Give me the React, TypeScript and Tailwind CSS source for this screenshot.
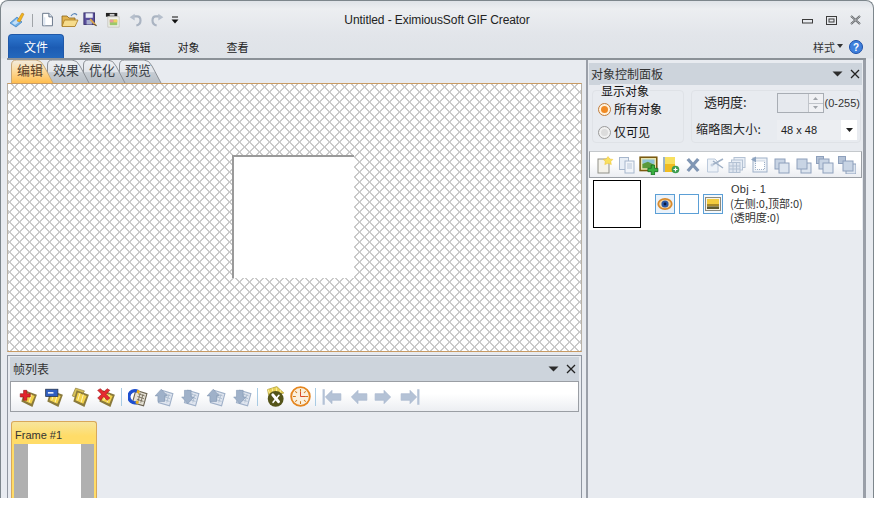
import React from "react";

const FONT = "font-['Noto_Sans_CJK_SC','Liberation_Sans',sans-serif]";

function Ico({ s = 18, children, className }: { s?: number; children: React.ReactNode; className?: string }) {
  return (
    <svg width={s} height={s} viewBox="0 0 18 18" className={className}>
      {children}
    </svg>
  );
}

const Wand = () => (
  <Ico s={18}>
    <path d="M1 12 L8 6 L13 11 L7 16 Z" fill="#6fb0e8" stroke="#3f7fc0" strokeWidth="0.7" />
    <path d="M3 12 L8 8 L10 11 L6 14 Z" fill="#c4e0f8" />
    <path d="M8 10 L13 2 L15 3 L11 11 Z" fill="#f2b51e" stroke="#b87a10" strokeWidth="0.5" />
  </Ico>
);
const NewDoc = () => (
  <Ico s={16}>
    <path d="M3 1.5 H10 L14 5.5 V15.5 H3 Z" fill="#fff" stroke="#5b6b80" />
    <path d="M10 1.5 V5.5 H14" fill="#dbe3ee" stroke="#5b6b80" />
    <rect x="4" y="6" width="2" height="9" fill="#dde6f2" />
  </Ico>
);
const Open = () => (
  <Ico s={18}>
    <path d="M1 5 H6 L8 7 H14 V15 H1 Z" fill="#e2b34f" stroke="#8c6418" strokeWidth="0.8" />
    <path d="M3.5 9 H17 L14 15.5 H1 Z" fill="#f6dc8c" stroke="#a87a20" strokeWidth="0.8" />
    <path d="M10 5 Q13 1 16 4" fill="none" stroke="#5b87b8" strokeWidth="1.2" />
  </Ico>
);
const SaveAs = () => (
  <Ico s={16}>
    <rect x="1" y="1" width="12" height="13" fill="#5a4e9c" stroke="#36306c" />
    <rect x="3" y="1.5" width="8" height="5" fill="#e8ecf6" />
    <rect x="4" y="9" width="6" height="5" fill="#aab0d0" />
    <path d="M8 8 L14.5 15" stroke="#d9a64a" strokeWidth="2" />
    <path d="M12.5 14 L15.5 15.5" stroke="#333" strokeWidth="1" />
  </Ico>
);
const Preview = () => (
  <Ico s={17}>
    <rect x="1" y="1" width="12" height="4" fill="#222" />
    <rect x="5" y="2" width="5" height="2" fill="#cfcfcf" />
    <path d="M3 5 H15 V16 H3 Z" fill="#f0f0ea" stroke="#c8c8c0" />
    <rect x="5" y="8" width="8" height="6" fill="#9cc86c" />
    <rect x="5" y="8" width="4" height="3" fill="#e89aa0" />
    <rect x="9" y="8" width="4" height="3" fill="#f0d060" />
  </Ico>
);
const Undo = ({ flip = false }: { flip?: boolean }) => (
  <Ico s={15} className={flip ? "-scale-x-100" : ""}>
    <path d="M6 4 H11 Q15 4 15 9 Q15 14 10 15" fill="none" stroke="#aab4c2" strokeWidth="2.6" />
    <path d="M8 1 L2 5 L8 9 Z" fill="#b6bfcc" />
  </Ico>
);
const Dots = () => (
  <svg width="8" height="8" viewBox="0 0 8 8">
    <rect x="1" y="0.5" width="6" height="1" fill="#111" />
    <path d="M0.5 3.5 H7.5 L4 7.5 Z" fill="#111" />
  </svg>
);

const film = (
  <>
    <path d="M6 3 L17 7 L13 18 L3 13 Z" fill="#8a7a3c" />
    <path d="M7 5 L15 8 L12 15 L5 12 Z" fill="#f2d24a" />
    <path d="M9 5.5 L7 12 M12 6.8 L10 13.8" stroke="#fff4b8" strokeWidth="0.9" />
  </>
);
const FrameAdd = () => (
  <Ico s={20}>
    {film}
    <path d="M5 3 H8 V6 H11 V9 H8 V12 H5 V9 H2 V6 H5 Z" fill="#e2242c" stroke="#8e1216" strokeWidth="0.5" />
  </Ico>
);
const FrameImg = () => (
  <Ico s={20}>
    {film}
    <rect x="1.5" y="2" width="11" height="6.5" fill="#2f5fc0" stroke="#24324a" strokeWidth="0.7" />
    <rect x="3.5" y="4.5" width="5" height="1.5" fill="#e8f0ff" />
  </Ico>
);
const FrameDup = () => (
  <Ico s={20}>
    <path d="M5 1 L13 3.5 L9 11 L2 8 Z" fill="#d8c25a" stroke="#8a7a3c" strokeWidth="0.6" />
    {film}
  </Ico>
);
const FrameDel = () => (
  <Ico s={20}>
    {film}
    <path d="M1.5 3 L4 1.5 L7 4.5 L10 1.5 L12.5 3 L9 6.5 L12.5 10 L10 12 L7 8.5 L4 12 L1.5 10 L5 6.5 Z" fill="#e62a30" stroke="#8e1216" strokeWidth="0.5" />
  </Ico>
);
const Sheet = ({ dim = true }: { dim?: boolean }) => (
  <>
    <path d="M7 3 L17 6 L14 17 L4 14 Z" fill={dim ? "#dfe5ef" : "#e4e0d4"} stroke={dim ? "#9fb0c8" : "#6a6250"} />
    <path d="M9 6 L15 8 M8.5 8.5 L14.5 10.5 M8 11 L14 13 M11 5.5 L9 13 M13.5 6.5 L11.5 14" stroke={dim ? "#a8b8cc" : "#6a6250"} strokeWidth="0.7" />
  </>
);
const Magnet = () => (
  <Ico s={20}>
    <Sheet dim={false} />
    <path d="M9 4 A5.5 5.5 0 1 0 8 14" fill="none" stroke="#1d4fd0" strokeWidth="3" />
    <path d="M8.5 2.5 L11 3.8 L9.5 6 L7.5 5 Z M8 12 L10 13.5 L8.5 15.5 L6.5 14.5 Z" fill="#e6b020" />
  </Ico>
);
const SheetUp = () => (
  <Ico s={20}>
    <Sheet />
    <path d="M6.5 2 L12 8 H9.5 V13 H3.5 V8 H1 Z" fill="#9fb1c9" stroke="#8195b2" strokeWidth="0.5" />
  </Ico>
);
const SheetDown = () => (
  <Ico s={20}>
    <Sheet />
    <path d="M4 3 H10 V9 H12.5 L7 15 L1.5 9 H4 Z" fill="#9fb1c9" stroke="#8195b2" strokeWidth="0.5" />
  </Ico>
);
const Gear = () => (
  <Ico s={21}>
    <path d="M3 3 L11 0.5 L17 6 L10 8 L4 8 Z" fill="#e8d054" stroke="#a89830" strokeWidth="0.6" />
    <path d="M5 7 L3.5 3 M8 7 L7 2 M11 7 L10.5 1.5 M14 7 L14 3.5" stroke="#fff2a0" strokeWidth="0.8" />
    <circle cx="10" cy="11" r="6.8" fill="#54541a" />
    <path d="M7.5 7.5 L12.5 13.5" stroke="#fff" strokeWidth="2.4" strokeLinecap="round" />
    <path d="M12.8 8 L7.8 14" stroke="#fff" strokeWidth="1.4" strokeLinecap="round" />
  </Ico>
);
const Clock = () => (
  <Ico s={21}>
    <circle cx="9" cy="9" r="8" fill="#fbf0dd" stroke="#e58620" strokeWidth="1.6" />
    <path d="M9 2.5 V5 M9 13 V15.5 M2.5 9 H5 M13 9 H15.5 M4.5 4.5 L6 6 M13.5 4.5 L12 6 M4.5 13.5 L6 12 M13.5 13.5 L12 12" stroke="#d07818" strokeWidth="0.9" />
    <path d="M9 5 V9 H13" fill="none" stroke="#d8401c" strokeWidth="0.8" />
  </Ico>
);
const Nav = ({ bar, dir }: { bar: boolean; dir: "l" | "r" }) => (
  <Ico s={20} className={dir === "r" ? "-scale-x-100" : ""}>
    {bar && <rect x="0.5" y="2" width="2" height="14" fill="#b4c2d6" />}
    <path d="M3 9 L9 3 V6 H17 V12 H9 V15 Z" fill="#b4c2d6" stroke="#a9b8ce" strokeWidth="0.6" />
  </Ico>
);

const ObjNew = () => (
  <Ico s={18}>
    <rect x="2" y="3" width="11" height="14" fill="#f4f2ea" stroke="#8f8f88" />
    <path d="M12 0.5 L13.8 3 L16.8 3.4 L14.8 5.6 L15.3 8.6 L12 7.2 L8.8 8.6 L9.3 5.6 L7.3 3.4 L10.2 3 Z" fill="#f8e060" stroke="#eec030" strokeWidth="0.5" />
  </Ico>
);
const ObjCopy = () => (
  <Ico s={18}>
    <rect x="1.5" y="1.5" width="9" height="12" fill="#e8eef6" stroke="#a6b6cc" />
    <rect x="7" y="5" width="9" height="12" fill="#f2f5fa" stroke="#a6b6cc" />
    <path d="M9 8 H14 M9 10 H14 M9 12 H14" stroke="#b8c6d8" />
  </Ico>
);
const ObjImg = () => (
  <Ico s={20}>
    <rect x="1" y="2" width="15" height="12" fill="#e8e4b0" stroke="#7a5a10" strokeWidth="1.4" />
    <rect x="3" y="4" width="11" height="4" fill="#8fc4d8" />
    <path d="M3 8 L8 6 L14 9 V12 H3 Z" fill="#5a9a3c" />
    <path d="M11 9 H14 V12 H17 V15 H14 V18 H11 V15 H8 V12 H11 Z" fill="#38b040" stroke="#146820" strokeWidth="0.7" />
  </Ico>
);
const ObjMovie = () => (
  <Ico s={18}>
    <rect x="1" y="1" width="12" height="15" fill="#f0bc20" />
    <rect x="1" y="1" width="2" height="15" fill="#9ab4c8" />
    <rect x="3" y="1" width="10" height="7" fill="#f8e060" />
    <circle cx="13.5" cy="13.5" r="3.8" fill="#3c9c50" />
    <path d="M13.5 11.5 V15.5 M11.5 13.5 H15.5" stroke="#fff" strokeWidth="1.2" />
  </Ico>
);
const ObjX = () => (
  <Ico s={18}>
    <path d="M2.5 4 L5 2 L9 6.5 L13 2 L15.5 4 L11 9 L15.5 14 L13 16 L9 11.5 L5 16 L2.5 14 L7 9 Z" fill="#8096b4" />
  </Ico>
);
const ObjCut = () => (
  <Ico s={18}>
    <path d="M1.5 3 H9 L12 6 V16 H1.5 Z" fill="#edf2f8" stroke="#bccadc" />
    <path d="M6 9 L17 3 M7 5 L17 12" stroke="#9fb0c6" strokeWidth="1.5" />
    <circle cx="6" cy="9" r="1.5" fill="#c4d0e0" />
  </Ico>
);
const ObjStack = () => (
  <Ico s={18}>
    <rect x="6" y="1.5" width="11" height="10" fill="#e8eef6" stroke="#b4c2d4" />
    <rect x="3.5" y="4" width="11" height="10" fill="#e8eef6" stroke="#b4c2d4" />
    <rect x="1" y="6.5" width="11" height="10" fill="#dfe6f0" stroke="#b4c2d4" />
    <path d="M1 10 H12 M1 13 H12 M5 7 V16 M8.5 7 V16" stroke="#b4c2d4" />
  </Ico>
);
const ObjBack = () => (
  <Ico s={18}>
    <rect x="3" y="2" width="14" height="14" fill="#eef2f7" stroke="#9eb0c8" />
    <rect x="5.5" y="5" width="9" height="8.5" fill="#fff" stroke="#9eb0c8" strokeDasharray="1 1" />
    <path d="M1 3.5 L6 0.5 V6.5 Z" fill="#8ea4c0" />
  </Ico>
);
const Lay = ({ front, x1, y1, x2, y2, extra }: { front: boolean; x1: number; y1: number; x2: number; y2: number; extra?: boolean }) => {
  const a = <rect x={x1} y={y1} width="10" height="10" fill="#c8d4e4" stroke="#8ea0bc" />;
  const b = <rect x={x2} y={y2} width="10" height="10" fill="#dde5ef" stroke="#8ea0bc" />;
  return (
    <Ico s={18}>
      {extra && <rect x="0.5" y="0.5" width="7" height="7" fill="#b4c2d6" stroke="#8ea0bc" />}
      {front ? a : b}
      {front ? b : a}
    </Ico>
  );
};

const Eye = () => (
  <svg width="16" height="14" viewBox="0 0 16 14">
    <ellipse cx="8" cy="7" rx="7.6" ry="6" fill="#d88a2c" />
    <ellipse cx="8" cy="7" rx="5.8" ry="4.2" fill="#f4d8a8" />
    <circle cx="8" cy="7" r="3.6" fill="#2a58a8" />
    <circle cx="8" cy="7" r="1.4" fill="#0c1c40" />
  </svg>
);
const Landscape = () => (
  <svg width="16" height="14" viewBox="0 0 16 14">
    <rect x="0.5" y="0.5" width="15" height="13" fill="#f5f2e8" stroke="#8a8a80" />
    <rect x="2" y="2" width="12" height="5" fill="#f2cb3e" />
    <rect x="2" y="7" width="12" height="2.5" fill="#a8892a" />
    <rect x="2" y="9.5" width="12" height="2.5" fill="#5d5830" />
  </svg>
);

function Tab({ label, active, w, z }: { label: string; active?: boolean; w: number; z: string }) {
  const d = `M0.5 24 V6 Q0.5 1 5.5 1 H${w - 18} Q${w - 13} 1 ${w - 10} 7 L${w - 1} 24`;
  const id = active ? "tabA" : "tabI";
  return (
    <div className={`relative h-6 shrink-0 mr-[-7px] ${z}`} style={{ width: w }}>
      <svg width={w} height={24} className="absolute inset-0">
        <defs>
          <linearGradient id="tabA" x1="0" y1="0" x2="0" y2="1">
            <stop offset="0" stopColor="#f2ece0" />
            <stop offset="0.45" stopColor="#fcdca0" />
            <stop offset="1" stopColor="#ffbd4e" />
          </linearGradient>
          <linearGradient id="tabI" x1="0" y1="0" x2="0" y2="1">
            <stop offset="0" stopColor="#eef0f3" />
            <stop offset="0.5" stopColor="#e2e5ea" />
            <stop offset="0.55" stopColor="#c6ccd3" />
            <stop offset="1" stopColor="#b8bfc6" />
          </linearGradient>
        </defs>
        <path d={d} fill={`url(#${id})`} stroke={active ? "#c8a878" : "#8c9096"} />
      </svg>
      <span className={`absolute left-[6px] top-[2px] text-[13px] leading-[18px] whitespace-nowrap ${active ? "text-[#5a4028]" : "text-[#3a3f46]"}`}>{label}</span>
    </div>
  );
}

const PanelBtns = () => (
  <div className="flex items-center gap-[7px]">
    <svg width="11" height="6" viewBox="0 0 11 6">
      <path d="M0.5 0.5 H10.5 L5.5 5.5 Z" fill="#2c2c2c" />
    </svg>
    <svg width="10" height="10" viewBox="0 0 10 10">
      <path d="M1 1 L9 9 M9 1 L1 9" stroke="#222" strokeWidth="1.3" />
    </svg>
  </div>
);

const Slot = ({ children }: { children: React.ReactNode }) => (
  <div className="w-[26px] flex items-center justify-center shrink-0">{children}</div>
);
const RSlot = ({ children }: { children: React.ReactNode }) => (
  <div className="w-[22px] flex items-center justify-center shrink-0">{children}</div>
);
const VSep = () => <div className="w-px h-[18px] bg-[#a8cbe4] ml-[2px] mr-[3px] shrink-0" />;

const Radio = ({ on, label }: { on?: boolean; label: string }) => (
  <div className="flex items-center gap-[3px]">
    <div className={`w-[13px] h-[13px] rounded-full border flex items-center justify-center ${on ? "border-[#c07c3c] bg-[#fff2dd]" : "border-[#9a9a9a] bg-[#f0f0f0]"}`}>
      <div className={`w-[7px] h-[7px] rounded-full ${on ? "bg-[#f08a24]" : "bg-[#dcdcdc]"}`} />
    </div>
    <span className="text-[12px] leading-[16px] text-[#111]">{label}</span>
  </div>
);

export default function App() {
  return (
    <div className={`w-[874px] h-[517px] bg-white overflow-hidden ${FONT}`}>
      <div className="h-[498px] rounded-t-[8px] border-x border-t border-[#7d868c] bg-[linear-gradient(180deg,#dfe3e8_0px,#eceef1_8px,#e2e5ea_34px,#dfe3e8_57px,#e8ebf0_58px)] flex flex-col overflow-hidden">
        {/* title bar */}
        <div className="h-[33px] shrink-0 grid grid-cols-[1fr_auto_1fr] items-center">
          <div className="flex items-center pl-[8px] pt-[5px]">
            <Wand />
            <div className="w-px h-[13px] bg-[#a0a4a8] mx-[5px]" />
            <div className="ml-[2px]"><NewDoc /></div>
            <div className="ml-[5px]"><Open /></div>
            <div className="ml-[4px]"><SaveAs /></div>
            <div className="ml-[6px]"><Preview /></div>
            <div className="ml-[6px]"><Undo /></div>
            <div className="ml-[7px]"><Undo flip /></div>
            <div className="ml-[6px]"><Dots /></div>
          </div>
          <div className="text-[12px] pt-[4px] text-[#222] font-['Liberation_Sans',sans-serif] tracking-[-0.08px]">Untitled - EximiousSoft GIF Creator</div>
          <div className="flex items-center justify-end gap-[13px] pr-[12px] pt-[5px]">
            <svg width="11" height="8" viewBox="0 0 11 8"><rect x="0.5" y="3.5" width="10" height="3.5" fill="none" stroke="#3c3c3c" /></svg>
            <svg width="11" height="9" viewBox="0 0 11 9"><rect x="0.5" y="0.5" width="10" height="8" fill="none" stroke="#3c3c3c" /><rect x="3" y="3" width="5" height="3" fill="none" stroke="#3c3c3c" /></svg>
            <svg width="11" height="10" viewBox="0 0 11 10"><path d="M1 1 L10 9 M10 1 L1 9" stroke="#585c60" strokeWidth="2" /><path d="M1 1 L10 9 M10 1 L1 9" stroke="#eee" strokeWidth="0.6" /></svg>
          </div>
        </div>
        {/* ribbon tabs */}
        <div className="h-[24px] shrink-0 flex items-stretch pl-[7px]">
          <div className="w-[56px] rounded-t-[4px] border border-[#1f58a8] border-b-0 bg-[linear-gradient(180deg,#2f78d0,#1c5cb4_55%,#2468bc)] flex items-center justify-center text-[12px] text-white">文件</div>
          <div className="flex ml-[2px]">
            {["绘画", "编辑", "对象", "查看"].map((t) => (
              <div key={t} className="w-[49px] flex items-center justify-center text-[11px] text-[#222] pt-[3px]">{t}</div>
            ))}
          </div>
          <div className="ml-auto flex items-center pr-[10px] pt-[2px]">
            <span className="text-[11px] text-[#333]">样式</span>
            <svg width="6" height="4" viewBox="0 0 6 4" className="ml-[2px] mb-[3px]"><path d="M0 0 H6 L3 4 Z" fill="#333" /></svg>
            <svg width="14" height="14" viewBox="0 0 14 14" className="ml-[6px]">
              <circle cx="7" cy="7" r="6.5" fill="#3f80dc" stroke="#1e50a8" />
              <text x="7" y="10.5" textAnchor="middle" fontSize="10" fontWeight="700" fill="#fff" fontFamily="Liberation Sans">?</text>
            </svg>
          </div>
        </div>
        {/* body */}
        <div className="flex-1 min-h-0 flex pl-[6px] pr-[7px]">
          <div className="w-[575px] shrink-0 flex flex-col border-t-2 border-[#8b9197]">
            {/* tabs */}
            <div className="h-[23px] shrink-0 flex items-end pl-[4px] overflow-hidden">
              <Tab label="编辑" active w={43} z="z-30" />
              <Tab label="效果" w={43} z="z-20" />
              <Tab label="优化" w={43} z="z-10" />
              <Tab label="预览" w={43} z="z-0" />
            </div>
            {/* canvas */}
            <div className="h-[269px] shrink-0 border border-[#c89a62] border-x-[#b8b2a8] flex items-center justify-center pr-[4px] pb-[3px] bg-white bg-[repeating-linear-gradient(45deg,#cacaca_0,#cacaca_1px,transparent_1px,transparent_7.07px),repeating-linear-gradient(-45deg,#cacaca_0,#cacaca_1px,transparent_1px,transparent_7.07px)]">
              <div className="w-[122px] h-[123px] bg-white border-t-2 border-l-2 border-[#9a9a9a]" />
            </div>
            {/* frame list */}
            <div className="mt-[3px] flex-1 min-h-0 border-x border-t border-[#9096a0] pt-px px-[2px] flex flex-col overflow-hidden">
              <div className="h-[24px] shrink-0 bg-[#cdd4dc] flex items-center justify-between pl-[3px] pr-[3px]">
                <span className="text-[12px] text-[#333]">帧列表</span>
                <PanelBtns />
              </div>
              <div className="h-[31px] shrink-0 border border-[#9a9ea4] bg-[linear-gradient(180deg,#ffffff_40%,#eceef2)] flex items-center pl-[4px]">
                <Slot><FrameAdd /></Slot>
                <Slot><FrameImg /></Slot>
                <Slot><FrameDup /></Slot>
                <Slot><FrameDel /></Slot>
                <VSep />
                <Slot><Magnet /></Slot>
                <Slot><SheetUp /></Slot>
                <Slot><SheetDown /></Slot>
                <Slot><SheetUp /></Slot>
                <Slot><SheetDown /></Slot>
                <VSep />
                <Slot><Gear /></Slot>
                <Slot><Clock /></Slot>
                <VSep />
                <Slot><Nav bar dir="l" /></Slot>
                <Slot><Nav bar={false} dir="l" /></Slot>
                <Slot><Nav bar={false} dir="r" /></Slot>
                <Slot><Nav bar dir="r" /></Slot>
              </div>
              <div className="pt-[9px] pl-[1px]">
                <div className="w-[86px] h-[90px] rounded-t-[3px] border border-[#d8a85a] border-b-0 bg-[linear-gradient(180deg,#f7e59c,#ffdc68_14px)] px-[2px]">
                  <div className="h-[22px] text-[11px] leading-[20px] pt-[3px] pl-[1px] text-[#333] font-['Liberation_Sans',sans-serif]">Frame #1</div>
                  <div className="h-[60px] bg-[#b0b0b0] flex justify-center">
                    <div className="w-[53px] bg-white" />
                  </div>
                </div>
              </div>
            </div>
          </div>
          <div className="w-[4px] shrink-0 border-t-2 border-[#8b9197]" />
          {/* right panel */}
          <div className="w-[280px] shrink-0 border-t-2 border-[#8b9197] flex flex-col">
            <div className="flex-1 border-r-[3px] border-l-[2px] border-[#9a9fa8] pt-[3px] px-[1px] flex flex-col">
              <div className="h-[22px] shrink-0 bg-[#cdd4dc] flex items-center justify-between pl-[2px] pr-[2px]">
                <span className="text-[12px] text-[#333]">对象控制面板</span>
                <PanelBtns />
              </div>
              <div className="h-[66px] shrink-0 flex gap-[7px] pl-[3px] pt-[5px]">
                <div className="relative w-[92px] h-[53px] rounded-[4px] border border-[#dfe2e7] bg-[#e8ebf0] pl-[5px] pt-[10px] flex flex-col gap-[7px]">
                  <span className="absolute left-[7px] top-[-7px] bg-[#e8ebf0] text-[12px] leading-[14px] text-[#111] px-px">显示对象</span>
                  <Radio on label="所有对象" />
                  <Radio label="仅可见" />
                </div>
                <div className="w-[170px] h-[53px] rounded-[4px] border border-[#dfe2e7] flex flex-col gap-[7px] pl-[4px] pt-[2px]">
                  <div className="flex items-center h-[20px]">
                    <span className="w-[81px] pl-[8px] pb-[2px] text-[13px] text-[#222]">透明度:</span>
                    <div className="w-[47px] h-[20px] border border-[#a8adb4] bg-[#e6e9ee] flex justify-end">
                      <div className="w-[15px] flex flex-col">
                        <div className="flex-1 bg-[#f0f1f4] border-l border-[#c0c4ca] flex items-center justify-center"><svg width="5" height="3" viewBox="0 0 5 3"><path d="M0 3 L2.5 0 L5 3Z" fill="#a0a4aa" /></svg></div>
                        <div className="flex-1 bg-[#f0f1f4] border-l border-t border-[#c0c4ca] flex items-center justify-center"><svg width="5" height="3" viewBox="0 0 5 3"><path d="M0 0 L2.5 3 L5 0Z" fill="#a0a4aa" /></svg></div>
                      </div>
                    </div>
                    <span className="ml-px text-[11px] whitespace-nowrap text-[#333] font-['Liberation_Sans',sans-serif]">(0-255)</span>
                  </div>
                  <div className="flex items-center h-[20px]">
                    <span className="w-[81px] pb-[2px] text-[12px] tracking-[0.3px] whitespace-nowrap text-[#222]">缩略图大小:</span>
                    <div className="w-[80px] h-[20px] bg-white flex items-center">
                      <div className="w-[64px] h-full bg-[#eceef2] flex items-center pl-[4px] text-[11px] text-[#222] font-['Liberation_Sans',sans-serif]">48 x 48</div>
                      <svg width="7" height="4" viewBox="0 0 7 4" className="ml-[5px]"><path d="M0 0 H7 L3.5 4 Z" fill="#222" /></svg>
                    </div>
                  </div>
                </div>
              </div>
              <div className="h-[27px] shrink-0 border border-[#9a9ea4] border-t-[#c4c8cc] bg-[linear-gradient(180deg,#ffffff_40%,#eceef2)] flex items-center pl-[4px]">
                <RSlot><ObjNew /></RSlot>
                <RSlot><ObjCopy /></RSlot>
                <RSlot><ObjImg /></RSlot>
                <RSlot><ObjMovie /></RSlot>
                <RSlot><ObjX /></RSlot>
                <RSlot><ObjCut /></RSlot>
                <RSlot><ObjStack /></RSlot>
                <RSlot><ObjBack /></RSlot>
                <RSlot><Lay front x1={3} y1={3} x2={7} y2={7} /></RSlot>
                <RSlot><Lay front={false} x1={3} y1={3} x2={7} y2={7} /></RSlot>
                <RSlot><Lay front x1={3} y1={3} x2={7} y2={7} extra /></RSlot>
                <RSlot><Lay front={false} x1={5} y1={5} x2={8} y2={8} extra /></RSlot>
              </div>
              <div className="h-[52px] shrink-0 bg-white flex items-center pl-[4px]">
                <div className="w-[48px] h-[48px] border border-black bg-white shrink-0" />
                <div className="ml-[14px] flex gap-[4px]">
                  <div className="w-[20px] h-[20px] border border-[#5b9fd6] bg-[#eaf2fa] flex items-center justify-center"><Eye /></div>
                  <div className="w-[20px] h-[20px] border border-[#5b9fd6] bg-white" />
                  <div className="w-[20px] h-[20px] border border-[#5b9fd6] bg-[#f4f8fc] flex items-center justify-center"><Landscape /></div>
                </div>
                <div className="ml-[7px] flex flex-col gap-px text-[11px] leading-[13px] text-[#333] -mt-[2px]">
                  <span className="pl-[1px] font-['Liberation_Sans',sans-serif] tracking-[0.3px]">Obj - 1</span>
                  <span>(左侧:0,顶部:0)</span>
                  <span>(透明度:0)</span>
                </div>
              </div>
            </div>
          </div>
        </div>
      </div>
    </div>
  );
}
